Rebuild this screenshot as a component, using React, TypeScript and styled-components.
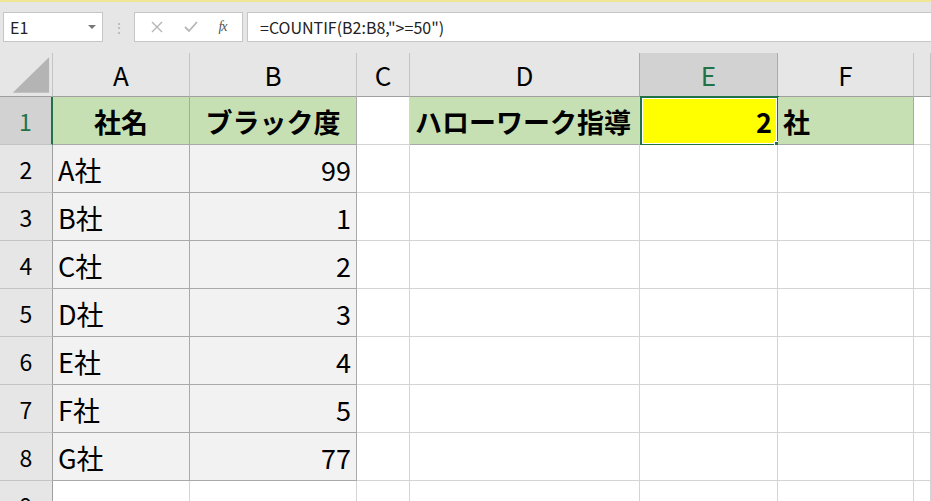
import React from "react";
import styled, { createGlobalStyle, css } from "styled-components";

const GlobalStyle = createGlobalStyle`
  html, body {
    margin: 0;
    padding: 0;
    background: #ffffff;
    overflow: hidden;
  }
  body {
    font-family: "Noto Sans CJK JP", "Noto Sans", sans-serif;
    color: #000;
  }
`;

const GRID = "#d4d4d4";
const STRONG = "#a9a9a9";
const GREEN = "#217346";

const Page = styled.div`
  width: 931px;
  height: 501px;
  overflow: hidden;
  display: flex;
  flex-direction: column;
`;

const Toolbar = styled.div`
  height: 53px;
  flex: none;
  background: #e6e6e6;
  border-top: 2px solid #efe796;
  display: flex;
  align-items: flex-start;
  padding-top: 10px;
  box-sizing: border-box;
`;

const NameBox = styled.div`
  width: 100px;
  height: 30px;
  margin-left: 3px;
  box-sizing: border-box;
  background: #fff;
  border: 1px solid #c6c6c6;
  display: flex;
  align-items: center;
  justify-content: space-between;
  padding: 0 6px 0 6px;
  font-size: 16px;
  color: #222;
`;

const DropArrow = styled.span`
  width: 0;
  height: 0;
  border-left: 4px solid transparent;
  border-right: 4px solid transparent;
  border-top: 4px solid #777;
`;

const Dots = styled.div`
  width: 31px;
  height: 30px;
  display: flex;
  align-items: center;
  justify-content: center;
  color: #b2b2b2;
  font-size: 14px;
`;

const FxBox = styled.div`
  width: 109px;
  height: 30px;
  box-sizing: border-box;
  background: #fff;
  border: 1px solid #c6c6c6;
  display: flex;
  align-items: center;
  justify-content: space-around;
  padding: 0 6px;
`;

const Fx = styled.span`
  font-family: "Liberation Serif", "DejaVu Serif", serif;
  font-style: italic;
  font-size: 14px;
  color: #555;
  letter-spacing: -1px;
`;

const FormulaInput = styled.div`
  flex: 1;
  height: 30px;
  margin-left: 4px;
  box-sizing: border-box;
  background: #fff;
  border: 1px solid #c6c6c6;
  border-right: none;
  display: flex;
  align-items: center;
  padding-left: 12px;
  font-size: 16px;
  color: #222;
  white-space: pre;
`;

const Sheet = styled.div`
  display: grid;
  grid-template-columns: 53px 137px 167px 53px 230px 138px 136px 1fr;
  grid-template-rows: 44px;
  grid-auto-rows: 48px;
  background: #e6e6e6;
`;

const Corner = styled.div`
  box-sizing: border-box;
  border-right: 1px solid #c4c4c4;
  border-bottom: 1px solid #9f9f9f;
  display: flex;
`;

const ColHeader = styled.div<{ $active?: boolean }>`
  box-sizing: border-box;
  display: flex;
  align-items: center;
  justify-content: center;
  font-size: 26px;
  border-right: 1px solid #c4c4c4;
  border-bottom: 1px solid #9f9f9f;
  color: #000;
  ${(p) =>
    p.$active &&
    css`
      background: #d2d2d2;
      color: ${GREEN};
      border-left: 1px solid #ababab;
      border-right: 1px solid #ababab;
      margin-left: -1px;
    `}
`;

const RowHeader = styled.div<{ $active?: boolean }>`
  box-sizing: border-box;
  display: flex;
  align-items: center;
  justify-content: center;
  font-size: 23px;
  border-right: 1px solid #9f9f9f;
  border-bottom: 1px solid #c4c4c4;
  ${(p) =>
    p.$active &&
    css`
      background: #d2d2d2;
      color: ${GREEN};
      border-right: 2px solid ${GREEN};
    `}
`;

type Fill = "white" | "green" | "gray" | "yellow";

const fills: Record<Fill, string> = {
  white: "#ffffff",
  green: "#c6e0b4",
  gray: "#f2f2f2",
  yellow: "#ffff00",
};

const Cell = styled.div<{
  $fill?: Fill;
  $align?: "left" | "center" | "right";
  $bold?: boolean;
  $right?: boolean;
  $bottom?: boolean;
}>`
  position: relative;
  box-sizing: border-box;
  display: flex;
  align-items: center;
  padding: 1px 5px 0 5px;
  font-size: 27px;
  white-space: nowrap;
  background: ${(p) => fills[p.$fill ?? "white"]};
  font-weight: ${(p) => (p.$bold ? 700 : 400)};
  justify-content: ${(p) =>
    p.$align === "right" ? "flex-end" : p.$align === "center" ? "center" : "flex-start"};
  border-right: 1px solid ${(p) => (p.$right ? STRONG : GRID)};
  border-bottom: 1px solid ${(p) => (p.$bottom ? STRONG : GRID)};
`;

const Selection = styled.div`
  position: absolute;
  top: -1px;
  left: 0;
  width: 139px;
  height: 50px;
  box-sizing: border-box;
  border: 2px solid ${GREEN};
  box-shadow: inset 0 0 0 1px #fff;
  pointer-events: none;
`;

const FillHandle = styled.div`
  position: absolute;
  right: -4px;
  bottom: -4px;
  width: 7px;
  height: 7px;
  box-sizing: border-box;
  background: ${GREEN};
  border: 1px solid #fff;
`;

const CrossIcon = () => (
  <svg width="14" height="14" viewBox="0 0 14 14">
    <path d="M2 2 L12 12 M12 2 L2 12" stroke="#b6b6b6" strokeWidth="1.4" fill="none" />
  </svg>
);

const CheckIcon = () => (
  <svg width="16" height="14" viewBox="0 0 16 14">
    <path d="M2 7 L6 11 L14 2" stroke="#b6b6b6" strokeWidth="1.8" fill="none" />
  </svg>
);

const SelectAll = () => (
  <svg width="53" height="44" viewBox="0 0 53 44">
    <polygon points="50,4 50,40 13,40" fill="#b4b4b4" />
  </svg>
);

const data: [string, number][] = [
  ["A社", 99],
  ["B社", 1],
  ["C社", 2],
  ["D社", 3],
  ["E社", 4],
  ["F社", 5],
  ["G社", 77],
];

const columns = ["A", "B", "C", "D", "E", "F", ""];

const BlankTail = () => (
  <>
    <Cell />
    <Cell />
    <Cell />
    <Cell />
    <Cell />
  </>
);

export default function App() {
  return (
    <Page>
      <GlobalStyle />
      <Toolbar>
        <NameBox>
          E1
          <DropArrow />
        </NameBox>
        <Dots>⋮</Dots>
        <FxBox>
          <CrossIcon />
          <CheckIcon />
          <Fx>fx</Fx>
        </FxBox>
        <FormulaInput>=COUNTIF(B2:B8,"&gt;=50")</FormulaInput>
      </Toolbar>
      <Sheet>
        <Corner>
          <SelectAll />
        </Corner>
        {columns.map((c, i) => (
          <ColHeader key={i} $active={c === "E"}>
            {c}
          </ColHeader>
        ))}

        <RowHeader $active>1</RowHeader>
        <Cell $fill="green" $align="center" $bold $right $bottom>
          社名
        </Cell>
        <Cell $fill="green" $align="center" $bold $right $bottom>
          ブラック度
        </Cell>
        <Cell />
        <Cell $fill="green" $bold $bottom>
          ハローワーク指導
        </Cell>
        <Cell $fill="yellow" $align="right" $bold $bottom>
          2
          <Selection>
            <FillHandle />
          </Selection>
        </Cell>
        <Cell $fill="green" $bold $right $bottom>
          社
        </Cell>
        <Cell />

        {data.map(([name, value], i) => (
          <React.Fragment key={name}>
            <RowHeader>{i + 2}</RowHeader>
            <Cell $fill="gray" $right $bottom>
              {name}
            </Cell>
            <Cell $fill="gray" $align="right" $right $bottom>
              {value}
            </Cell>
            <BlankTail />
          </React.Fragment>
        ))}

        <RowHeader>9</RowHeader>
        <Cell />
        <Cell />
        <BlankTail />
      </Sheet>
    </Page>
  );
}
